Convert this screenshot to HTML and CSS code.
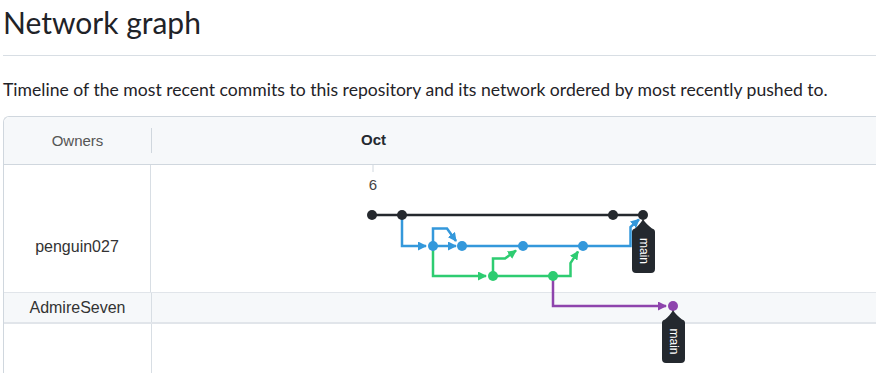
FILE: index.html
```html
<!DOCTYPE html>
<html lang="en">
<head>
<meta charset="utf-8">
<title>Network graph</title>
<link rel="stylesheet" href="styles.css">
</head>
<body>
<div class="page">
  <div class="subhead">
    <h2 class="title">Network graph</h2>
  </div>
  <p class="desc">Timeline of the most recent commits to this repository and its network ordered by most recently pushed to.</p>
  <div class="graph">
    <div class="head">
      <div class="owners-h"><span class="owners-label">Owners</span></div>
      <div class="time-h"></div>
    </div>
    <div class="row row-main">
      <div class="owner owner-tall">penguin027</div>
      <div class="lane"></div>
    </div>
    <div class="row row-alt">
      <div class="owner">AdmireSeven</div>
      <div class="lane"></div>
    </div>
    <div class="row row-rest">
      <div class="owner"></div>
      <div class="lane"></div>
    </div>
    <svg class="overlay" width="900" height="260" viewBox="0 0 900 260" xmlns="http://www.w3.org/2000/svg">
      <defs>
        <marker id="ab" markerUnits="userSpaceOnUse" markerWidth="9" markerHeight="9" refX="8" refY="4.5" orient="auto"><path d="M0 0 L9 4.5 L0 9 Z" fill="#3498db"/></marker>
        <marker id="ag" markerUnits="userSpaceOnUse" markerWidth="9" markerHeight="9" refX="8" refY="4.5" orient="auto"><path d="M0 0 L9 4.5 L0 9 Z" fill="#2ecc71"/></marker>
        <marker id="ap" markerUnits="userSpaceOnUse" markerWidth="9" markerHeight="9" refX="8" refY="4.5" orient="auto"><path d="M0 0 L9 4.5 L0 9 Z" fill="#8e44ad"/></marker>
      </defs>
      <g transform="translate(-4,-117)">
        <text class="month" x="373.5" y="145" text-anchor="middle">Oct</text>
        <line x1="373" y1="165" x2="373" y2="172" stroke="#d0d7de" stroke-width="1"/>
        <text class="day" x="373" y="190" text-anchor="middle">6</text>

        <g fill="none" stroke-width="2.5" stroke-linejoin="miter">
          <path d="M372 215 H643" stroke="#25292e"/>
          <path d="M402 215 V246 H426" stroke="#3498db" marker-end="url(#ab)"/>
          <path d="M433 246 H456" stroke="#3498db" marker-end="url(#ab)"/>
          <path d="M433 246 V228.5 H447 L456 241" stroke="#3498db" marker-end="url(#ab)"/>
          <path d="M462 246 H583" stroke="#3498db"/>
          <path d="M583 246 H630.5 V227 L639 219.5" stroke="#3498db" marker-end="url(#ab)"/>
          <path d="M433 246 V276 H486" stroke="#2ecc71" marker-end="url(#ag)"/>
          <path d="M493 276 V258.5 H505 L516 250.5" stroke="#2ecc71" marker-end="url(#ag)"/>
          <path d="M493 276 H570.5 V263 L578 251.5" stroke="#2ecc71" marker-end="url(#ag)"/>
          <path d="M553 276 V306 H666" stroke="#8e44ad" marker-end="url(#ap)"/>
        </g>

        <g fill="#25292e">
          <circle cx="372" cy="215" r="5"/>
          <circle cx="402" cy="215" r="5"/>
          <circle cx="613" cy="215" r="5"/>
          <circle cx="643" cy="215" r="5"/>
        </g>
        <g fill="#3498db">
          <circle cx="433" cy="246" r="5"/>
          <circle cx="462" cy="246" r="5"/>
          <circle cx="523" cy="246" r="5"/>
          <circle cx="583" cy="246" r="5"/>
        </g>
        <g fill="#2ecc71">
          <circle cx="493" cy="276" r="5"/>
          <circle cx="553" cy="276" r="5"/>
        </g>
        <circle cx="673" cy="306" r="5" fill="#8e44ad"/>

        <g class="ref">
          <path d="M643 219 C645 223 649 226 652 228.5 Q655 229 655 232 V269 Q655 273 651 273 H636 Q632 273 632 269 V232 Q632 229 635 228.5 C638 226 641 223 643 219 Z" fill="#24292f"/>
          <text x="643.5" y="251" transform="rotate(90 643.5 251)" text-anchor="middle" dominant-baseline="central">main</text>
        </g>
        <g class="ref">
          <path d="M673 310 C675 314 679 317 682 319.5 Q685 320 685 323 V359 Q685 363 681 363 H666 Q662 363 662 359 V323 Q662 320 665 319.5 C668 317 671 314 673 310 Z" fill="#24292f"/>
          <text x="673.5" y="341.5" transform="rotate(90 673.5 341.5)" text-anchor="middle" dominant-baseline="central">main</text>
        </g>
      </g>
    </svg>
  </div>
</div>
</body>
</html>
```

FILE: styles.css
```css
html, body {
  margin: 0;
  padding: 0;
  background: #ffffff;
  overflow: hidden;
}

.page {
  padding-left: 3px;
  font-family: Lato, "Open Sans", sans-serif;
  color: #1f2328;
}

.subhead {
  padding-top: 2px;
  padding-bottom: 13px;
  border-bottom: 1px solid #d8dee4;
}

.title {
  margin: 0;
  font-size: 30px;
  line-height: 40px;
  font-weight: 400;
}

.desc {
  margin: 21px 0 13px 0;
  font-size: 17.6px;
  line-height: 26px;
  white-space: nowrap;
}

.graph {
  position: relative;
  width: 900px;
  height: 300px;
  border: 1px solid #d0d7de;
  border-right: none;
  border-top-left-radius: 6px;
  display: flex;
  flex-direction: column;
  font-family: "Liberation Sans", Arial, sans-serif;
  color: #333333;
}

.head {
  display: flex;
  height: 47px;
  background: #f6f8fa;
  border-bottom: 1px solid #d0d7de;
  border-top-left-radius: 6px;
}

.owners-h {
  width: 148px;
  display: flex;
  align-items: center;
}

.owners-label {
  flex: 1;
  height: 25px;
  line-height: 25px;
  text-align: center;
  font-size: 15px;
  color: #555555;
  border-right: 1px solid #d0d7de;
}

.time-h {
  flex: 1;
}

.row {
  display: flex;
}

.row-main {
  height: 127px;
  border-bottom: 1px solid #e1e5ea;
}

.row-alt {
  height: 29px;
  background: #f6f8fa;
  border-bottom: 2px solid #e1e5ea;
}

.row-rest {
  flex: 1;
}

.owner {
  width: 147px;
  border-right: 1px solid #d8dee4;
  font-size: 16px;
  line-height: 20px;
  text-align: center;
  display: flex;
  align-items: center;
  justify-content: center;
}

.owner-tall {
  align-items: flex-start;
  padding-top: 72px;
  box-sizing: border-box;
}

.lane {
  flex: 1;
}

.overlay {
  position: absolute;
  left: 0;
  top: 0;
  pointer-events: none;
  overflow: visible;
}

.month {
  font-family: "Liberation Sans", Arial, sans-serif;
  font-weight: 700;
  font-size: 15px;
  fill: #24292f;
}

.day {
  font-family: "Liberation Sans", Arial, sans-serif;
  font-size: 15px;
  fill: #444444;
}

.ref text {
  font-family: "Liberation Sans", Arial, sans-serif;
  font-size: 12px;
  fill: #ffffff;
}
```
